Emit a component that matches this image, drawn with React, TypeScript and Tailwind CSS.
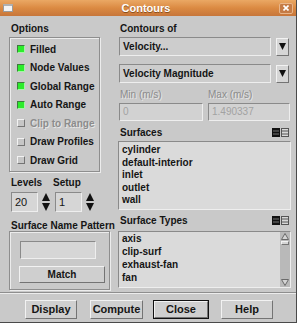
import React from "react";

const sunken = "border-t border-l border-t-[#8a8a8a] border-l-[#8a8a8a] border-b border-r border-b-[#eeeeee] border-r-[#eeeeee]";
const raised = "border-t border-l border-t-[#f2f2f2] border-l-[#f2f2f2] border-b border-r border-b-[#747474] border-r-[#747474]";
const etched = "border border-[#8e8e8e] shadow-[inset_1px_1px_0_#ececec,1px_1px_0_#ececec]";

const options = [
  { label: "Filled", on: true },
  { label: "Node Values", on: true },
  { label: "Global Range", on: true },
  { label: "Auto Range", on: true },
  { label: "Clip to Range", on: false, disabled: true },
  { label: "Draw Profiles", on: false },
  { label: "Draw Grid", on: false },
];

const surfaces = ["cylinder", "default-interior", "inlet", "outlet", "wall"];
const surfaceTypes = ["axis", "clip-surf", "exhaust-fan", "fan"];

const Check = ({ on }: { on: boolean }) =>
  on ? (
    <div className="w-[8px] h-[8px] bg-[#2cec2c] border-t border-l border-t-[#3f7a3f] border-l-[#3f7a3f] border-b border-r border-b-[#a6f5a6] border-r-[#a6f5a6]" />
  ) : (
    <div className={`w-[8px] h-[8px] bg-[#c6c6c6] ${raised}`} />
  );

const Spinner = () => (
  <svg width="10" height="20" viewBox="0 0 10 20" className="ml-[3px]">
    <polygon points="5,1 9,9 1,9" fill="#111" />
    <polygon points="1,11 9,11 5,19" fill="#111" />
  </svg>
);

const ArrowButton = () => (
  <div className={`w-[13px] h-[18px] bg-[#d6d6d6] flex items-center justify-center ${raised}`}>
    <svg width="7" height="9" viewBox="0 0 7 9">
      <polygon points="0,1 7,1 3.5,8" fill="#111" />
    </svg>
  </div>
);

const ListIcons = () => (
  <div className="flex gap-[1px] mr-[1px]">
    <svg width="8" height="9" viewBox="0 0 8 9">
      <rect x="0" y="0" width="8" height="9" fill="#111" />
      <line x1="1" y1="3" x2="7" y2="3" stroke="#777" />
      <line x1="1" y1="6" x2="7" y2="6" stroke="#777" />
    </svg>
    <svg width="8" height="9" viewBox="0 0 8 9">
      <rect x="0.5" y="0.5" width="7" height="8" fill="#d8d8d8" stroke="#555" />
      <line x1="1" y1="3" x2="7" y2="3" stroke="#555" />
      <line x1="1" y1="6" x2="7" y2="6" stroke="#555" />
    </svg>
  </div>
);

export default function App() {
  return (
    <div className="w-[300px] h-[326px] bg-white font-[family-name:Liberation_Sans,Arial,sans-serif] text-[10px] font-bold text-[#151515] overflow-hidden">
      <div className="w-[297px] h-[323px] bg-[#c9c9c9] border-r border-b border-[#4a4a4a] flex flex-col">
        {/* title bar */}
        <div className="h-[16px] bg-gradient-to-b from-[#eaa864] via-[#db8a42] to-[#c7763a] flex items-center px-[3px]">
          <div className="w-[10px] h-[8px] bg-[#f4f4f4] border border-[#9a9a9a] border-t-[2px] border-t-[#b0b0b0]" />
          <div className="flex-1 text-center text-white text-[11px] leading-[16px] [text-shadow:0_1px_0_#8a4f1e]">
            Contours
          </div>
          <div className="w-[14px] h-[11px] rounded-[2px] bg-[#c57b45] border border-[#e8b58a] flex items-center justify-center">
            <svg width="6" height="6" viewBox="0 0 6 6">
              <path d="M0.5 0.5 L5.5 5.5 M5.5 0.5 L0.5 5.5" stroke="#fff" strokeWidth="1.6" />
            </svg>
          </div>
        </div>

        {/* main */}
        <div className="flex pl-[9px] pt-[7px]">
          {/* left column */}
          <div className="w-[101px] flex flex-col">
            <div className="h-[12px] leading-[12px] pl-[2px]">Options</div>
            <div className={`mt-[2px] w-[91px] h-[135px] pt-[2px] flex flex-col ${etched}`}>
              {options.map((o) => (
                <div key={o.label} className="h-[18.5px] flex items-center pl-[7px] gap-[5px]">
                  <Check on={o.on} />
                  <span className={o.disabled ? "text-[#8c8c8c] [text-shadow:1px_1px_0_#e6e6e6]" : ""}>{o.label}</span>
                </div>
              ))}
            </div>

            <div className="mt-[5px] h-[12px] leading-[12px] flex">
              <span className="w-[44px] pl-[2px]">Levels</span>
              <span>Setup</span>
            </div>
            <div className="mt-[3px] flex pl-[2px]">
              <div className={`w-[27px] h-[20px] bg-[#d6d6d6] font-normal text-[11px] leading-[18px] pl-[3px] ${sunken}`}>20</div>
              <Spinner />
              <div className={`ml-[4px] w-[27px] h-[20px] bg-[#d6d6d6] font-normal text-[11px] leading-[18px] pl-[3px] ${sunken}`}>1</div>
              <Spinner />
            </div>

            <div className="mt-[8px] h-[11px] leading-[11px] pl-[2px] whitespace-nowrap">Surface Name Pattern</div>
            <div className={`w-[101px] h-[59px] flex flex-col ${etched}`}>
              <div className={`mt-[9px] ml-[10px] w-[76px] h-[18px] bg-[#d6d6d6] ${sunken}`} />
              <div className={`mt-[7px] ml-[9px] w-[86px] h-[17px] bg-[#cfcfcf] text-center leading-[15px] ${raised}`}>
                Match
              </div>
            </div>
          </div>

          {/* right column */}
          <div className="ml-[7px] w-[174px] flex flex-col">
            <div className="h-[12px] leading-[12px] pl-[3px]">Contours of</div>
            <div className="mt-[2px] flex items-center pl-[2px]">
              <div className={`w-[152px] h-[19px] bg-[#cdcdcd] leading-[17px] pl-[3px] ${sunken}`}>Velocity...</div>
              <div className="ml-[5px]"><ArrowButton /></div>
            </div>
            <div className="mt-[8px] flex items-center pl-[2px]">
              <div className={`w-[152px] h-[19px] bg-[#cdcdcd] leading-[17px] pl-[3px] ${sunken}`}>Velocity Magnitude</div>
              <div className="ml-[5px]"><ArrowButton /></div>
            </div>
            <div className="mt-[6px] h-[12px] leading-[12px] flex font-normal text-[#8c8c8c] [text-shadow:1px_1px_0_#e6e6e6]">
              <span className="w-[91px] pl-[3px]">Min (m/s)</span>
              <span>Max (m/s)</span>
            </div>
            <div className="mt-[2px] flex pl-[2px] font-normal text-[#a2a2a2] text-[10px]">
              <div className={`w-[84px] h-[18px] bg-[#d2d2d2] leading-[16px] pl-[3px] ${sunken}`}>0</div>
              <div className={`ml-[5px] w-[82px] h-[18px] bg-[#d2d2d2] leading-[16px] pl-[3px] ${sunken}`}>1.490337</div>
            </div>

            <div className="mt-[3px] h-[17px] flex items-center justify-between pl-[3px] pr-[1px]">
              <span>Surfaces</span>
              <ListIcons />
            </div>
            <div className={`ml-[1px] w-[173px] h-[69px] bg-[#dadada] pt-[2px] pl-[3px] leading-[12.6px] ${sunken}`}>
              {surfaces.map((s) => (
                <div key={s}>{s}</div>
              ))}
            </div>

            <div className="h-[21px] flex items-center justify-between pl-[3px] pr-[1px]">
              <span>Surface Types</span>
              <ListIcons />
            </div>
            <div className={`ml-[1px] w-[173px] h-[57px] bg-[#dadada] flex ${sunken}`}>
              <div className="flex-1 pl-[3px] leading-[13px]">
                {surfaceTypes.map((s) => (
                  <div key={s}>{s}</div>
                ))}
              </div>
              <div className="w-[10px] h-full bg-[#b9b9b9] flex flex-col items-center justify-between py-[1px]">
                <div className="flex flex-col items-center">
                  <svg width="8" height="7" viewBox="0 0 8 7">
                    <polygon points="4,0.5 7.5,6.5 0.5,6.5" fill="#d4d4d4" stroke="#6a6a6a" />
                  </svg>
                  <div className={`mt-[1px] w-[8px] h-[4px] bg-[#d4d4d4] ${raised}`} />
                </div>
                <svg width="8" height="7" viewBox="0 0 8 7">
                  <polygon points="0.5,0.5 7.5,0.5 4,6.5" fill="#d4d4d4" stroke="#6a6a6a" />
                </svg>
              </div>
            </div>
          </div>
        </div>

        {/* separator */}
        <div className="mt-[2px] h-[2px] border-t border-t-[#8e8e8e] border-b border-b-[#ececec]" />

        {/* buttons */}
        <div className="mt-[6px] flex pl-[25px] text-[11px]">
          <div className={`w-[52px] h-[19px] bg-[#cfcfcf] text-center leading-[17px] ${raised}`}>Display</div>
          <div className={`ml-[13px] w-[53px] h-[19px] bg-[#cfcfcf] text-center leading-[17px] ${raised}`}>Compute</div>
          <div className="ml-[10px] w-[56px] h-[19px] border border-[#111] flex">
            <div className={`flex-1 bg-[#cfcfcf] text-center leading-[15px] ${raised}`}>Close</div>
          </div>
          <div className={`ml-[12px] w-[52px] h-[19px] bg-[#cfcfcf] text-center leading-[17px] ${raised}`}>Help</div>
        </div>
      </div>
    </div>
  );
}
